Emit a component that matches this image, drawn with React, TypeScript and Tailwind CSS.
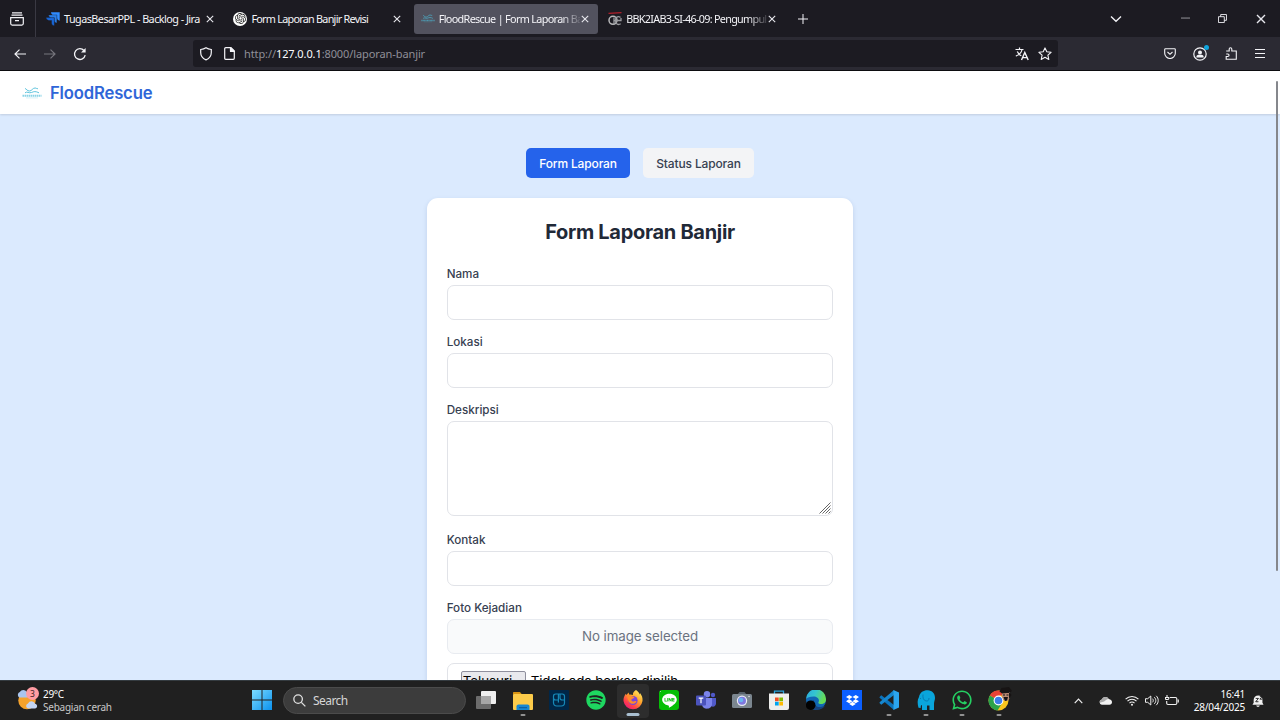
import type { ReactNode } from "react";
import { SiOpenai } from "react-icons/si";
import { FaSpotify, FaLine, FaDropbox, FaWhatsapp } from "react-icons/fa";

const UI = "font-['Noto_Sans','Open_Sans',sans-serif]";

function Close({ cls = "size-[8px]" }: { cls?: string }) {
  return (
    <svg viewBox="0 0 8 8" className={`${cls} shrink-0`} fill="none" stroke="#e8e8ee" strokeWidth="1.1">
      <path d="M.8.8l6.4 6.4M7.2.8L.8 7.2" />
    </svg>
  );
}

function JiraIcon() {
  return (
    <svg viewBox="0 0 14 14" className="size-[14px] shrink-0">
      <path d="M5 .3h8.700v8.400c-1.700-.2-2.600-1.200-2.700-2.900V3.500H8.200C6.300 3.300 5.200 2.200 5 .3z" fill="#2f8bff" />
      <path d="M2.600 2.900h8.300v8.200c-1.700-.2-2.600-1.200-2.700-2.900V5.900H5.500C3.800 5.700 2.700 4.700 2.600 2.900z" fill="#2a7fe8" stroke="#1c1b22" strokeWidth=".35" />
      <path d="M.1 5.600h8.200v8.200c-1.700-.2-2.600-1.200-2.700-2.900V8.500H3C1.300 8.300.2 7.400.1 5.600z" fill="#1868db" stroke="#1c1b22" strokeWidth=".35" />
    </svg>
  );
}

function WaveIcon({ cls }: { cls: string }) {
  return (
    <svg viewBox="0 0 20 14" className={`${cls} shrink-0`} fill="none" stroke="#4bbcd8">
      <path d="M3 2.500c1.500.2 2 2.600 4.500 2.500S10.500 2 13 2c1.500 0 1.500 1 3 .6M3 6.800c2-1.800 4 .8 6.500-.3s4-1.400 7.500.3" strokeWidth=".9" />
      <path d="M.5 9.800h19" strokeWidth="2" strokeDasharray="1.500 .5" opacity=".65" />
      <path d="M4 11.900h12" strokeWidth=".7" opacity=".35" />
    </svg>
  );
}

function CampusIcon() {
  return (
    <svg viewBox="0 0 14 14" className="size-[14px] shrink-0" fill="none">
      <path d="M.5 1.300L13.500.7" stroke="#b3202c" strokeWidth="1.300" />
      <circle cx="5" cy="8.300" r="4" stroke="#b8b8ba" strokeWidth="1.500" />
      <path d="M6 5.500v6.500M6 8.600h3M12.500 5.300c-3-1.500-5 0-5 3.200s2.300 5 5.200 3.300M8 8.500h5V6" stroke="#9b9ba0" strokeWidth="1.300" />
    </svg>
  );
}

function Tab({ icon, title, active, fade, text }: { icon: ReactNode; title: string; active?: boolean; fade?: boolean; text: string }) {
  return (
    <div className={`flex h-[30px] w-[184px] items-center rounded-[3px] pl-[7px] ${active ? "bg-[#52525e]" : ""}`}>
      {icon}
      <div
        className={`ml-1 w-[141px] whitespace-nowrap text-[10.800px] leading-[18px] text-[#f4f4f8] ${text} ${
          fade ? "[mask-image:linear-gradient(to_right,black_122px,transparent_144px)]" : ""
        }`}
      >
        {title}
      </div>
      <div className="ml-[1px] flex">
        <Close />
      </div>
    </div>
  );
}

function Browser() {
  return (
    <header className={`${UI} shrink-0`}>
      <div className="flex h-[37px] items-center bg-[#1c1b22]">
        <div className="flex h-full w-9 items-center justify-center border-r border-[#3a3943] pr-[2px]">
          <svg viewBox="0 0 14 14" className="size-[14px]" fill="none" stroke="#f4f4f8" strokeWidth="1.200">
            <path d="M2 .9h10M1.500 3.200h11" />
            <path d="M.7 5.600h12.600v6a1.500 1.500 0 0 1-1.500 1.500H2.200a1.500 1.500 0 0 1-1.500-1.500zM5 8.700h4" />
          </svg>
        </div>
        <div className="ml-[3px] flex gap-[3.400px]">
          <Tab icon={<JiraIcon />} title="TugasBesarPPL - Backlog - Jira" text="tracking-[-0.53px]" />
          <Tab
            icon={
              <span className="flex size-[14px] shrink-0 items-center justify-center rounded-full bg-white text-[11px] text-[#222]">
                <SiOpenai />
              </span>
            }
            title="Form Laporan Banjir Revisi"
            text="tracking-[-0.73px]"
          />
          <Tab icon={<WaveIcon cls="w-[14px] h-[11px]" />} title="FloodRescue | Form Laporan Ba" active fade text="tracking-[-0.66px]" />
          <Tab icon={<CampusIcon />} title="BBK2IAB3-SI-46-09: Pengumpul" fade text="tracking-[-0.7px]" />
        </div>
        <svg viewBox="0 0 10 10" className="ml-[13px] size-[10px]" stroke="#f4f4f8" strokeWidth="1">
          <path d="M5 0v10M0 5h10" />
        </svg>
        <div className="ml-auto flex items-center pr-[14px]">
          <svg viewBox="0 0 12 8" className="mr-[59px] h-[8px] w-[12px]" fill="none" stroke="#f4f4f8" strokeWidth="1.300">
            <path d="M1 1.500l5 4.800 5-4.800" />
          </svg>
          <svg viewBox="0 0 10 10" className="mr-[28px] size-[9px]" stroke="#a0a0a6" strokeWidth="1">
            <path d="M0 4.500h10" />
          </svg>
          <svg viewBox="0 0 10 10" className="mr-[29px] size-[9px]" fill="none" stroke="#f4f4f8" strokeWidth="1">
            <path d="M.5 3h6.500v6.500H.5zM3 3V.6h6.400V7H7" />
          </svg>
          <Close cls="size-[10px]" />
        </div>
      </div>
      <div className="flex h-[33px] items-center bg-[#2b2a33]">
        <svg viewBox="0 0 12 10" className="ml-[14px] h-[10px] w-[12px]" fill="none" stroke="#f4f4f8" strokeWidth="1.200">
          <path d="M12 5H1M5.500.6L1 5l4.500 4.400" />
        </svg>
        <svg viewBox="0 0 12 10" className="ml-[18px] h-[10px] w-[12px]" fill="none" stroke="#77767e" strokeWidth="1.200">
          <path d="M0 5h11M6.500.6L11 5 6.500 9.400" />
        </svg>
        <svg viewBox="0 0 14 14" className="ml-[17px] size-[14px]" fill="none" stroke="#f4f4f8" strokeWidth="1.300">
          <path d="M12.200 8.200A5.400 5.400 0 1 1 11 3.500" />
          <path d="M12.600.9v4.600H8z" fill="#f4f4f8" stroke="none" />
        </svg>
        <div className="ml-[106px] flex h-[27px] w-[865px] items-center rounded-[3px] bg-[#1c1b22]">
          <svg viewBox="0 0 12 14" className="ml-[7px] h-[14px] w-[12px]" fill="none" stroke="#f4f4f8" strokeWidth="1.200">
            <path d="M6 .8c1.500 1.100 3.300 1.600 5.300 1.700v3c0 3.200-1.800 5.900-5.300 7.400C2.500 11.400.7 8.700.7 5.500v-3C2.700 2.400 4.500 1.900 6 .8z" />
          </svg>
          <svg viewBox="0 0 11 13" className="ml-[12px] h-[13px] w-[11px]" fill="none" stroke="#f4f4f8" strokeWidth="1.200" strokeLinejoin="round">
            <path d="M2 .7h5L10.300 4v7.300c0 .6-.4 1-1 1H1.700c-.6 0-1-.4-1-1V1.700c0-.6.4-1 1-1z" />
            <path d="M6.500.7v3.800h3.800z" fill="#f4f4f8" />
          </svg>
          <div className="ml-[9px] whitespace-nowrap pt-px text-[11px] leading-[18px] tracking-[-0.1px] text-[#8f8f98]">
            http://<span className="text-[#fbfbfe]">127.0.0.1</span>:8000/laporan-banjir
          </div>
          <div className="ml-auto flex items-center gap-[9px] pr-[6px]">
            <svg viewBox="0 0 14 14" className="size-[14px]" fill="none" stroke="#f4f4f8" strokeWidth="1.200">
              <path d="M.5 2.500h8M4.500.5v2M7 2.500C6.500 5.500 4 8 .8 9M2.300 4.500c.8 2 2.300 3.500 4 4.300" />
              <path d="M6.500 13L9.800 5.500 13.200 13M7.700 10.600h4.300" strokeWidth="1.400" />
            </svg>
            <svg viewBox="0 0 14 14" className="size-[14px]" fill="none" stroke="#f4f4f8" strokeWidth="1.100" strokeLinejoin="round">
              <path d="M7 .9l1.800 3.900 4.300.5-3.200 2.900.9 4.300L7 10.300l-3.800 2.200.9-4.300L.9 5.300l4.300-.5z" />
            </svg>
          </div>
        </div>
        <div className="ml-auto flex items-center pr-[15px]">
          <svg viewBox="0 0 12 11" className="mr-[17px] h-[11px] w-[12px]" fill="none" stroke="#f4f4f8" strokeWidth="1.100">
            <path d="M1.500.8h9c.5 0 .8.300.8.800v3.600a5.300 5.300 0 0 1-10.600 0V1.600c0-.5.300-.8.800-.8zM3.500 4L6 6.300 8.500 4" />
          </svg>
          <div className="relative mr-[18px]">
            <svg viewBox="0 0 14 14" className="size-[14px]" fill="none" stroke="#f4f4f8" strokeWidth="1.200">
              <circle cx="7" cy="7" r="6.200" />
              <circle cx="7" cy="5.500" r="2" fill="#f4f4f8" stroke="none" />
              <path d="M3.300 10.500c0-2.400 1-2.800 3.700-2.800s3.700.4 3.700 2.800z" fill="#f4f4f8" stroke="none" />
            </svg>
            <span className="absolute -top-[2px] left-[11px] size-[5px] rounded-full bg-[#0fa4dd]" />
          </div>
          <svg viewBox="0 0 12 13" className="mr-[18px] h-[13px] w-[12px]" fill="none" stroke="#f4f4f8" strokeWidth="1.100">
            <path d="M1.200 4h3V2a1.300 1.300 0 0 1 2.600 0v2h4.500v8.300H1.200V9.500h1.600a1.200 1.200 0 0 0 0-2.500H1.200" />
          </svg>
          <svg viewBox="0 0 10 9" className="h-[9px] w-[10px]" stroke="#f4f4f8" strokeWidth="1">
            <path d="M0 .5h10M0 4.500h10M0 8.500h10" />
          </svg>
        </div>
      </div>
      <div className="h-px bg-[#0c0c0f]" />
    </header>
  );
}

function Field({ label, children }: { label: string; children: ReactNode }) {
  return (
    <div className="mb-[13px]">
      <div className="mb-[3px] pt-px text-[11.670px] font-medium leading-[16px] text-[#374151]">{label}</div>
      {children}
    </div>
  );
}

const box = "w-full rounded-[7px] border border-[#e1e3e8]";

function Page() {
  return (
    <main className="relative flex min-h-0 flex-1 flex-col overflow-hidden bg-[#dbeafe] font-['Inter',sans-serif]">
      <nav className="z-10 flex h-[43px] shrink-0 items-center bg-white pl-[22px] shadow-[0_1px_2px_rgba(0,0,0,0.12)]">
        <WaveIcon cls="w-[20px] h-[14px]" />
        <span className="ml-[8px] text-[16.670px] font-semibold leading-6 tracking-[-0.17px] text-[#2f66d8]">FloodRescue</span>
      </nav>
      <div className="mt-[34px] flex shrink-0 justify-center gap-[13px] text-[12px] font-medium tracking-[-0.15px]">
        <div className="flex h-[30px] w-[104px] items-center justify-center whitespace-nowrap rounded-[5px] bg-[#2563eb] pt-px text-white">Form Laporan</div>
        <div className="flex h-[30px] w-[111px] items-center justify-center whitespace-nowrap rounded-[5px] bg-[#f3f4f6] pt-px text-[#374151]">Status Laporan</div>
      </div>
      <section className="mx-auto mt-5 h-[600px] w-[426.670px] shrink-0 rounded-[11px] bg-white px-5 pt-[21px] shadow-[0_2px_5px_rgba(30,64,120,0.14)]">
        <h1 className="mb-[19px] text-center text-[20px] font-bold leading-[27px] tracking-[-0.3px] text-[#1f2937]">Form Laporan Banjir</h1>
        <Field label="Nama">
          <div className={`${box} h-[35px]`} />
        </Field>
        <Field label="Lokasi">
          <div className={`${box} h-[35px]`} />
        </Field>
        <Field label="Deskripsi">
          <div className={`${box} flex h-[95px] items-end justify-end p-[1px]`}>
            <svg viewBox="0 0 12 12" className="size-[12px]" stroke="#555" strokeWidth=".9">
              <path d="M.5 11.500l11-11M3.500 11.500l8-8M6.500 11.500l5-5M9.500 11.500l2-2" />
            </svg>
          </div>
        </Field>
        <div className="h-[2px]" />
        <Field label="Kontak">
          <div className={`${box} h-[35px]`} />
        </Field>
        <Field label="Foto Kejadian">
          <div className="flex h-[35px] items-center justify-center rounded-[7px] border border-[#e8ebf0] bg-[#f9fafb] text-[13.330px] tracking-[-0.08px] text-[#6b7280]">
            No image selected
          </div>
        </Field>
        <div className={`${box} -mt-1 flex h-[45px] items-start px-[13px] pt-[7px] text-[13.330px] leading-[20px] tracking-[-0.08px] text-black`}>
          <span className="flex h-[20px] w-[65px] items-center justify-center rounded-[2px] border border-[#8f8f9d] bg-[#e9e9ed]">Telusuri…</span>
          <span className="ml-[5px]">Tidak ada berkas dipilih.</span>
        </div>
      </section>
      <div className="absolute right-[2px] top-[10px] z-20 h-[490px] w-[2px] rounded-full bg-[#85878c]" />
    </main>
  );
}

function TaskIcon({ children, mark, active }: { children: ReactNode; mark?: boolean; active?: boolean }) {
  return (
    <div className={`relative flex h-[34px] w-[32px] items-center justify-center rounded-[4px] ${active ? "bg-[#2d2d2d]" : ""}`}>
      {children}
      {mark && (
        <span
          className={`absolute bottom-[2px] left-1/2 -translate-x-1/2 rounded-full ${active ? "h-[3px] w-[13px] bg-[#a9bfd0]" : "h-[2px] w-[5px] bg-[#929292]"}`}
        />
      )}
    </div>
  );
}

function Taskbar() {
  return (
    <footer className={`${UI} flex h-10 shrink-0 items-center border-t border-[#343b40] bg-[#202020]`}>
      <div className="flex w-[246px] items-center pl-[16px]">
        <svg viewBox="0 0 24 26" className="-mt-[3px] h-[26px] w-[24px]">
          <circle cx="11" cy="14.500" r="8.700" fill="#f5a22b" />
          <path d="M3.500 11.500a3 3 0 0 1 .3-5.500 4 4 0 0 1 7 0c2 .2 2.500 3 .7 5.500z" fill="#a9c5ee" />
          <path d="M12 22.500a2.600 2.600 0 0 1 0-5 3.800 3.800 0 0 1 7 .3c3 .4 2.700 4.700 0 4.700z" fill="#c2d4f3" />
          <circle cx="16.500" cy="7.500" r="6.500" fill="#ff9ca3" />
          <text x="16.500" y="10.500" fontSize="8.500" textAnchor="middle" fill="#3a1c1e">3</text>
        </svg>
        <div className="ml-[3px] whitespace-nowrap text-[10px] leading-[13px] tracking-[-0.24px] text-white">
          <div className="tracking-[-0.3px]">29°C</div>
          <div className="text-[#c8c8c8]">Sebagian cerah</div>
        </div>
      </div>
      <TaskIcon>
        <svg viewBox="0 0 20 20" className="-mt-px size-[20px]">
          <defs>
            <linearGradient id="win" x1="0" y1="0" x2="1" y2="1">
              <stop offset="0" stopColor="#7ddcff" />
              <stop offset="1" stopColor="#0a91ee" />
            </linearGradient>
          </defs>
          <path d="M0 0h9.500v9.500H0zM10.500 0H20v9.500h-9.500zM0 10.500h9.500V20H0zM10.500 10.500H20V20h-9.500z" fill="url(#win)" />
        </svg>
      </TaskIcon>
      <div className="ml-[5px] flex h-[27px] w-[183px] items-center rounded-full border border-[#4b4b4b] bg-[#3c3c3c] pl-[9px] text-[12px] text-[#d6d6d6]">
        <svg viewBox="0 0 14 14" className="size-[13px]" fill="none" stroke="#e0e0e0" strokeWidth="1.400">
          <circle cx="5.500" cy="5.500" r="4.600" />
          <path d="M9 9l4.300 4.300" />
        </svg>
        <span className="ml-[7px] tracking-[-0.55px]">Search</span>
      </div>
      <div className="ml-[4px] flex gap-[4.650px]">
        <TaskIcon>
          <svg viewBox="0 0 20 18" className="-mt-px h-[18px] w-[20px]">
            <rect x="5" y="0" width="15" height="13" rx="1" fill="#efefef" />
            <rect x="0" y="5" width="15" height="13" rx="1" fill="#6c6c6c" />
            <rect x="5" y="5" width="10" height="8" fill="#a7a7a7" />
          </svg>
        </TaskIcon>
        <TaskIcon mark>
          <svg viewBox="0 0 20 18" className="h-[18px] w-[20px]">
            <path d="M0 1c0-.6.400-1 1-1h6l2 2.500H0z" fill="#d99413" />
            <rect y="2" width="20" height="16" rx="1" fill="#fccb4a" />
            <path d="M3.500 18v-3.500c0-1.200.8-2 2-2h9c1.200 0 2 .8 2 2V18z" fill="#1687d3" />
            <path d="M6 15.700h8" stroke="#0c5797" />
          </svg>
        </TaskIcon>
        <TaskIcon>
          <svg viewBox="0 0 20 20" className="-mt-px size-[20px]" fill="none">
            <rect width="20" height="20" rx="1" fill="#002647" />
            <path d="M9.400 4v6H6.800c-1.500 0-2.300-.7-2.300-2.200V6.200C4.500 4.700 5.300 4 6.800 4h6.400c1.500 0 2.300.7 2.300 2.200v6.600c0 2-1.200 3.200-3.200 3.200H7.700c-2 0-3.200-1.200-3.200-3.200V7.500M11 4v3.800c0 1.500.8 2.200 2.200 2.200h2.300M9.400 10v2.500" stroke="#1688b7" strokeWidth="1.200" />
          </svg>
        </TaskIcon>
        <TaskIcon>
          <span className="-mt-px flex text-[20px] text-[#1ed760]">
            <FaSpotify />
          </span>
        </TaskIcon>
        <TaskIcon mark active>
          <svg viewBox="0 0 20 20" className="-mt-px size-[20px]">
            <defs>
              <linearGradient id="fox" x1=".9" y1="0" x2=".15" y2="1">
                <stop offset="0" stopColor="#fff36a" />
                <stop offset=".4" stopColor="#ffa62b" />
                <stop offset=".75" stopColor="#ff3c4b" />
                <stop offset="1" stopColor="#e31587" />
              </linearGradient>
            </defs>
            <path d="M13 0c3 2 3.500 4 4 4.500L17 3c2 2.500 2.800 5 2.500 8A9.600 9.600 0 0 1 .5 11c-.2-2.700.6-5.200 2.300-7.300L3.500 5 5.500 2.500l.8 2.200c1.500-.3 2.700.3 3.700.3C9.500 3 11 1 13 0z" fill="url(#fox)" />
            <circle cx="10" cy="10.500" r="4.600" fill="#7a45d8" />
            <path d="M3.500 5c2-.4 4 .2 5.500 1.300l2.500.7c-.5 1.400-2 1.700-2.800 1.900-.8 1.500.3 3 2.300 2.500 1-.3 1.700-.6 2.500 0-1 2.500-5.500 3.400-7.500.6C4.500 10 5 8 3.500 5z" fill="#ff8a2b" />
          </svg>
        </TaskIcon>
        <TaskIcon>
          <span className="-mt-px flex size-[20px] items-center justify-center overflow-hidden rounded-[3px] bg-[#06bf06]">
            <span className="flex size-[18px] items-center justify-center overflow-hidden bg-white text-[23px] text-[#06bf06]">
              <FaLine className="shrink-0" />
            </span>
          </span>
        </TaskIcon>
        <TaskIcon>
          <svg viewBox="0 0 20 18" className="-mt-px h-[18px] w-[20px]">
            <circle cx="11" cy="3.200" r="3.200" fill="#7b83eb" />
            <circle cx="17" cy="4" r="2.200" fill="#5059c9" />
            <path d="M13 7h7v5.500c0 3-3 4-5 2.500z" fill="#5059c9" />
            <path d="M6 7h10v6c0 6-10 6.500-10 0z" fill="#7b83eb" />
            <rect y="4.500" width="10" height="10" rx="1" fill="#4b53bc" />
            <path d="M2.700 7.200h4.600M5 7.200v5" stroke="#fff" strokeWidth="1.200" />
          </svg>
        </TaskIcon>
        <TaskIcon>
          <svg viewBox="0 0 20 16" className="-mt-px h-[16px] w-[20px]">
            <path d="M5.500 2.500L7.500 0h5l2 2.500z" fill="#566069" />
            <rect y="2" width="20" height="14" rx="1.500" fill="#7b868f" />
            <circle cx="10" cy="8.800" r="5.200" fill="#e9edf5" />
            <circle cx="10" cy="8.800" r="4" fill="#7f78e0" />
            <circle cx="9" cy="8" r="2.300" fill="#69b7ef" />
            <circle cx="17" cy="4.500" r=".8" fill="#ddd" />
          </svg>
        </TaskIcon>
        <TaskIcon>
          <svg viewBox="0 0 20 20" className="-mt-px size-[20px]">
            <path d="M5.500 5V1.200h9V5" fill="none" stroke="#2aa4dd" strokeWidth="1.300" />
            <path d="M0 3.500h20V18a2 2 0 0 1-2 2H2a2 2 0 0 1-2-2z" fill="#eeeeec" />
            <path d="M6 7.500h3.700v3.700H6z" fill="#f25022" />
            <path d="M10.300 7.500H14v3.700h-3.700z" fill="#7fba00" />
            <path d="M6 11.800h3.700v3.700H6z" fill="#00a4ef" />
            <path d="M10.300 11.800H14v3.700h-3.700z" fill="#ffb900" />
          </svg>
        </TaskIcon>
        <TaskIcon>
          <svg viewBox="0 0 20 20" className="-mt-px size-[20px]">
            <defs>
              <linearGradient id="edge" x1="0" y1="0" x2="1" y2=".3">
                <stop offset="0" stopColor="#2aa9e0" />
                <stop offset=".5" stopColor="#35c6cf" />
                <stop offset="1" stopColor="#66db55" />
              </linearGradient>
            </defs>
            <circle cx="10" cy="10" r="10" fill="#1167b4" />
            <path d="M0 9A10 10 0 0 1 20 9.500c0 3-2.300 4.500-4.700 4.500-2.300 0-3.500-.8-2.800-1.800C14 9.500 11.500 6.500 7.500 6.500 4 6.500 1 7.500 0 9z" fill="url(#edge)" />
            <path d="M8 10c-1 4 2 7.500 6.500 7 2-.2 3.500-1 4.500-1.500C17 19 13 20 10 20c-5 0-5-9-2-10z" fill="#16437e" />
            <circle cx="4.700" cy="15.200" r="4.800" fill="#020202" />
          </svg>
        </TaskIcon>
        <TaskIcon>
          <span className="-mt-px flex size-[20px] items-center justify-center bg-[#0b5fff] text-[13px] text-white">
            <FaDropbox />
          </span>
        </TaskIcon>
        <TaskIcon mark>
          <svg viewBox="0 0 20 20" className="-mt-px size-[20px]">
            <path d="M1 6.500L2.300 5.300 15 15v5L.9 8.100C.3 7.500.5 7 1 6.500z" fill="#0b74bd" />
            <path d="M1 13.500l1.300 1.200L15 5V0L.9 11.900c-.6.600-.4 1.100.1 1.600z" fill="#1687cf" />
            <path d="M14.500 0L20 2.500v15L14.500 20z" fill="#2ba5ef" />
          </svg>
        </TaskIcon>
        <TaskIcon mark>
          <svg viewBox="0 0 18 20" className="-mt-px h-[20px] w-[18px]">
            <path d="M2 7C3 2 7 0 11 .3c4 .2 7 3 7 7.700 0 2.500-1 3-1 6v6h-4.500v-4.500H10V20H5v-5c-1 .2-1.300 1-1.300 3l-2.200-.3C.5 14 0 10 2 7z" fill="#0aa5db" />
            <path d="M6 4.500c-.5 3 .5 6 3 6.500 2 .4 3-1 3-3M3.500 8v1" fill="none" stroke="#0877ad" strokeWidth=".9" />
          </svg>
        </TaskIcon>
        <TaskIcon mark>
          <span className="-mt-px flex text-[22px] text-[#25cf62]">
            <FaWhatsapp />
          </span>
        </TaskIcon>
        <TaskIcon mark>
          <svg viewBox="0 0 24 24" className="-mt-[3px] ml-[2px] size-[24px] shrink-0">
            <circle cx="10.500" cy="13.500" r="10" fill="#f9c51d" />
            <path d="M10.500 13.500L1.800 8.500A10 10 0 0 1 19.200 8.500H10.500z" fill="#e94335" />
            <path d="M1.800 8.500A10 10 0 0 0 9.500 23.500l5-8-4-2z" fill="#2ba24c" />
            <circle cx="10.500" cy="13.500" r="4.900" fill="#fff" />
            <circle cx="10.500" cy="13.500" r="3.800" fill="#3b7de9" />
            <path d="M14 5h8v4c0 3-2 5-4 5s-4-2-4-5z" fill="#b98972" />
            <path d="M11.500 4.500l2-3.500 7.500-1 3 4-2.500 1.800-7.500.7zM15.500 10h4.500l-1 3.500-2 .5zM21 5v7l2.500-4zM15 7.500h2v1h-2zM18.500 7.500h2v1h-2z" fill="#171414" />
          </svg>
        </TaskIcon>
      </div>
      <div className="ml-auto flex items-center pr-[16px]">
        <svg viewBox="0 0 10 6" className="mr-[16px] h-[6px] w-[9px]" fill="none" stroke="#eee" strokeWidth="1.300">
          <path d="M.8 5.300L5 1l4.200 4.300" />
        </svg>
        <svg viewBox="0 0 14 9" className="mr-[13px] h-[9px] w-[13px]">
          <path d="M3 9a2.800 2.800 0 0 1 0-5.500 4 4 0 0 1 7.500-.5C13 3.200 14 5 14 6.300 14 8 12.800 9 11.300 9z" fill="#f1f1f1" />
          <path d="M3 3.500a4 4 0 0 1 7.500-.5C8 3 7 5 5.500 5.500L1 7C0 5.500 1 3.700 3 3.500z" fill="#aaa" />
        </svg>
        <svg viewBox="0 0 14 11" className="mr-[6px] h-[11px] w-[14px]" fill="none" stroke="#f1f1f1" strokeWidth="1.100">
          <path d="M.6 4.200a9 9 0 0 1 12.800 0M2.500 6.200a6.300 6.300 0 0 1 9 0M4.500 8.100a3.500 3.500 0 0 1 5 0" />
          <circle cx="7" cy="9.700" r="1" fill="#f1f1f1" stroke="none" />
        </svg>
        <svg viewBox="0 0 14 11" className="mr-[6px] h-[11px] w-[14px]" fill="none" stroke="#f1f1f1" strokeWidth="1">
          <path d="M.5 3.700h2.200L5.800 1v9L2.700 7.300H.5zM7.500 3.700c1 1 1 2.600 0 3.600M9.300 2.200c2 2 2 4.600 0 6.600M11.200.8c2.700 2.700 2.700 6.700 0 9.400" />
        </svg>
        <svg viewBox="0 0 14 11" className="mr-[14px] h-[11px] w-[14px]" fill="none" stroke="#f1f1f1" strokeWidth="1.100">
          <path d="M5 2.500h5.500c.8 0 1.300.4 1.300 1.200v4.600c0 .8-.5 1.200-1.300 1.200H3c-.8 0-1.300-.4-1.300-1.200V6M13.300 4.500v3M2 0v2M.5 2.500h3.300v1.300c0 1-3.300 1-3.300 0z" />
        </svg>
        <div className="flex w-[52px] flex-col items-end whitespace-nowrap text-[10px] leading-[13px] tracking-[-0.2px] text-white">
          <div>16:41</div>
          <div>28/04/2025</div>
        </div>
        <svg viewBox="0 0 13 14" className="ml-[7px] h-[14px] w-[12px]">
          <path d="M.5 11l1.300-2V6c0-3 2-5 5-5s4.500 2 4.500 4.500V9l1.200 2zM4.500 12h4c-.5 2-3.500 2-4 0z" fill="#f1f1f1" />
          <path d="M4 4.200h3L4 7.800h3M8.500 2h2.700L8.500 5h2.700" fill="none" stroke="#202020" strokeWidth="1" />
        </svg>
      </div>
    </footer>
  );
}

export default function App() {
  return (
    <div className="flex h-[720px] w-[1280px] flex-col overflow-hidden">
      <Browser />
      <Page />
      <Taskbar />
    </div>
  );
}
